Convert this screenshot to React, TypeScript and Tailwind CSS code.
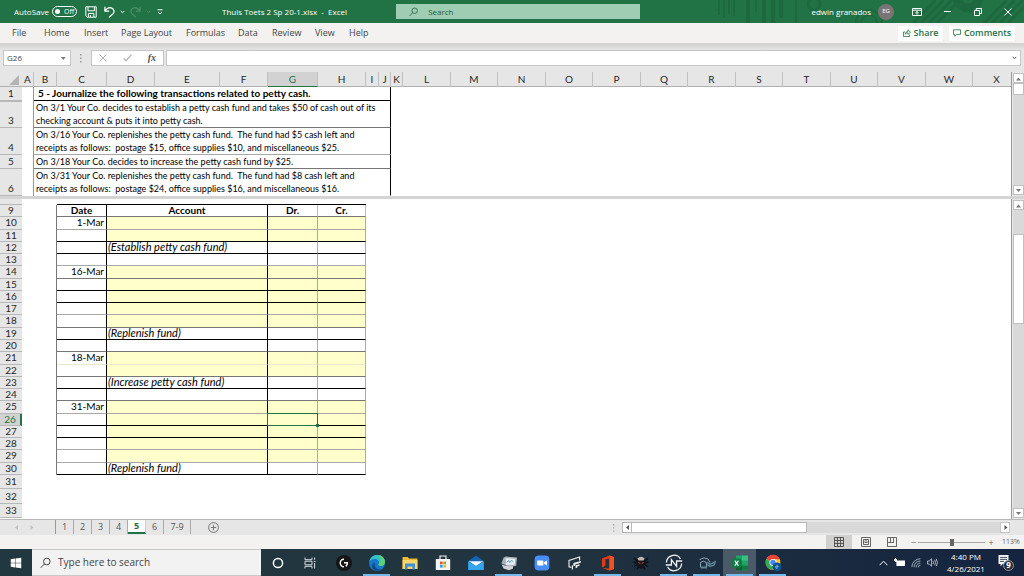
import React, { useState } from 'react'
import clsx from 'clsx'
import { FaWindows } from 'react-icons/fa'

const COLUMNS = 'ABCDEFGHIJKLMNOPQRSTUVWX'.split('')
const TABS = ['File', 'Home', 'Insert', 'Page Layout', 'Formulas', 'Data', 'Review', 'View', 'Help']
const SHEETS = ['1', '2', '3', '4', '5', '6', '7-9']

const DARK = 'border-b-black'
const MID = 'border-b-[#777]'
const SOFT = 'border-b-[#a8a8a8]'

const SHORT = 'h-[12px]'
const TALL = 'h-[13px]'

type Entry = { n: number; h: string; line: string; date?: string; note?: string; fill?: boolean }

const ENTRIES: Entry[] = [
    { n: 10, h: TALL, line: SOFT, date: '1-Mar', fill: true },
    { n: 11, h: SHORT, line: DARK, fill: true },
    { n: 12, h: SHORT, line: DARK, note: '(Establish petty cash fund)' },
    { n: 13, h: SHORT, line: SOFT },
    { n: 14, h: TALL, line: MID, date: '16-Mar', fill: true },
    { n: 15, h: SHORT, line: DARK, fill: true },
    { n: 16, h: SHORT, line: DARK, fill: true },
    { n: 17, h: SHORT, line: SOFT, fill: true },
    { n: 18, h: TALL, line: MID, fill: true },
    { n: 19, h: SHORT, line: DARK, note: '(Replenish fund)' },
    { n: 20, h: SHORT, line: MID },
    { n: 21, h: TALL, line: 'border-b-[#eaeaca]', date: '18-Mar', fill: true },
    { n: 22, h: SHORT, line: MID, fill: true },
    { n: 23, h: SHORT, line: DARK, note: '(Increase petty cash fund)' },
    { n: 24, h: SHORT, line: MID },
    { n: 25, h: TALL, line: SOFT, date: '31-Mar', fill: true },
    { n: 26, h: SHORT, line: DARK, fill: true },
    { n: 27, h: SHORT, line: DARK, fill: true },
    { n: 28, h: SHORT, line: SOFT, fill: true },
    { n: 29, h: TALL, line: SOFT, fill: true },
    { n: 30, h: SHORT, line: DARK, note: '(Replenish fund)' },
]

const BLANK_ROWS = [
    { n: 31, h: 'h-[14px]' },
    { n: 32, h: 'h-[15px]' },
    { n: 33, h: 'h-[14px]' },
]

const QUESTIONS = [
    { n: 3, h: 'h-[27px]', line: MID, text: ['On 3/1 Your Co. decides to establish a petty cash fund and takes $50 of cash out of its', 'checking account & puts it into petty cash.'] },
    { n: 4, h: 'h-[27px]', line: SOFT, text: ['On 3/16 Your Co. replenishes the petty cash fund.  The fund had $5 cash left and', 'receipts as follows:  postage $15, office supplies $10, and miscellaneous $25.'] },
    { n: 5, h: 'h-[14px]', line: MID, text: ['On 3/18 Your Co. decides to increase the petty cash fund by $25.'] },
    { n: 6, h: 'h-[27px]', line: 'border-b-white', text: ['On 3/31 Your Co. replenishes the petty cash fund.  The fund had $8 cash left and', 'receipts as follows:  postage $24, office supplies $16, and miscellaneous $16.'] },
]

const ROW_HEAD = 'border-b border-b-[#b8b8b8] p-0 text-center font-normal'

function Caret({ className = '' }: { className?: string }) {
    return (
        <svg className={className} width="5" height="4" viewBox="0 0 5 4" fill="none" stroke="currentColor">
            <path d="M0.7 0.9 2.5 2.7 4.3 0.9" />
        </svg>
    )
}

function Arrow({ dir }: { dir: 'up' | 'down' | 'left' | 'right' }) {
    const shapes = { up: 'M0 4.5 2.5 1.5 5 4.5z', down: 'M0 1 2.5 4 5 1z', left: 'M4 0 1 2.5 4 5z', right: 'M1.5 0 4.5 2.5 1.5 5z' }
    return (
        <svg width="5" height="5" viewBox="0 0 5 5" fill="currentColor">
            <path d={shapes[dir]} />
        </svg>
    )
}

function Magnifier({ size }: { size: number }) {
    return (
        <svg width={size} height={size} viewBox="0 0 12 12" fill="none" stroke="currentColor">
            <circle cx="7.4" cy="4.4" r="3.6" />
            <path d="M4.8 7 0.8 11.2" />
        </svg>
    )
}

function TitleArt() {
    return (
        <svg className="absolute right-0 top-0 h-[23px] w-[310px]" viewBox="0 0 310 23" fill="none" stroke="#1e683f">
            <path strokeWidth="2" d="M5 0v15M10 0v18M15 0v14M20 0v16M42 0v12M82 0v23" />
            <path strokeWidth="4" d="M34 0v23M50 0v23M59 0v23M67 0v18" />
            <circle cx="100" cy="4" r="6" strokeWidth="3" />
            <circle cx="155" cy="23" r="8" strokeWidth="2" />
            <circle cx="155" cy="23" r="13" strokeWidth="2" />
            <path strokeWidth="3" d="M199 23 222 0M207 23 230 0M215 23 238 0M223 23 246 0" />
            <path strokeWidth="9" d="M242 -4C246 12 262 12 266 -4" />
            <path strokeWidth="3" d="M270 23 293 0M278 23 301 0M286 23 309 0M294 23 317 0" />
        </svg>
    )
}

function TitleBar() {
    return (
        <header className="relative flex h-[23px] items-center bg-[#217346] text-[9px] text-white">
            <TitleArt />
            <div className="flex w-[222px] shrink-0 items-center pl-[14px]">
                <label className="flex w-[71px] items-center justify-between pr-2">
                    <span className="whitespace-nowrap text-[8px]">AutoSave</span>
                    <input type="checkbox" className="sr-only" />
                    <span className="flex h-[11px] w-[25px] items-center gap-[4px] rounded-full border border-white pl-[2px] text-[7px] leading-none">
                        <i className="size-[5px] rounded-full bg-white" />Off
                    </span>
                </label>
                <button aria-label="Save" className="w-[19px]">
                    <svg width="12" height="12" viewBox="0 0 12 12" fill="none" stroke="currentColor">
                        <path d="M0.8 0.8h10.4v10.4H2.2L0.8 9.8zM3 0.8v4h6.4v-4M3.4 11V7.4h5.4V11M5.4 9v2" />
                    </svg>
                </button>
                <button aria-label="Undo" className="flex w-[26px] items-center gap-[5px]">
                    <svg width="11" height="12" viewBox="0 0 11 12" fill="none" stroke="currentColor" strokeWidth="1.2">
                        <path d="M0.9 0.8v4.3h4.3M1 5C3 2 5 1.4 7 1.8c3 0.8 4 4 1.8 6.2L5 11.4" />
                    </svg>
                    <Caret />
                </button>
                <button aria-label="Redo" className="flex w-[27px] items-center gap-[5px] text-[#4b8e67]">
                    <svg width="11" height="12" viewBox="0 0 11 12" fill="none" stroke="currentColor" strokeWidth="1.2">
                        <path d="M10.1 0.8v4.3H5.8M10 5C8 2 6 1.4 4 1.8c-3 0.8-4 4-1.8 6.2L6 11.4" />
                    </svg>
                    <Caret />
                </button>
                <button aria-label="Customize toolbar">
                    <svg width="6" height="6" viewBox="0 0 6 6" fill="none" stroke="currentColor">
                        <path d="M0.5 0.8h5M1 3 3 5 5 3" />
                    </svg>
                </button>
            </div>
            <h1 className="w-[174px] shrink-0 whitespace-pre text-[8px]">Thuis Toets 2 Sp 20-1.xlsx  -  Excel</h1>
            <label className="flex h-[15px] w-[244px] items-center gap-[10px] bg-[#9fcdb3] pl-[13px] text-[#1e5c3a]">
                <Magnifier size={10} />
                <input aria-label="Search" placeholder="Search" className="w-full bg-transparent text-[8px] outline-none placeholder:text-[#1e5c3a]" />
            </label>
            <div className="relative ml-auto flex items-center">
                <span className="text-[8px]">edwin granados</span>
                <span className="ml-[7px] flex size-4 items-center justify-center rounded-full bg-[#7a7574] text-[6px]">EG</span>
                <button aria-label="Ribbon display options" className="flex w-[45px] justify-center">
                    <svg width="10" height="8" viewBox="0 0 10 8" fill="none" stroke="currentColor">
                        <path d="M0.5 0.5h9v7h-9zM0.5 2.2h9M5 6.6V3.6M3.4 5 5 3.5 6.6 5" />
                    </svg>
                </button>
                <button aria-label="Minimize" className="flex w-[16px] justify-center">
                    <i className="h-px w-[7px] bg-white" />
                </button>
                <button aria-label="Restore" className="flex w-[45px] justify-center">
                    <svg width="8" height="8" viewBox="0 0 8 8" fill="none" stroke="currentColor">
                        <path d="M0.5 2.5h5v5h-5zM2.2 2.3V0.5h5.3v5H5.8" />
                    </svg>
                </button>
                <button aria-label="Close" className="flex w-[24px] pl-[4px]">
                    <svg width="8" height="8" viewBox="0 0 8 8" stroke="currentColor">
                        <path d="M0.5 0.5 7.5 7.5M7.5 0.5 0.5 7.5" />
                    </svg>
                </button>
            </div>
        </header>
    )
}

function Ribbon() {
    return (
        <nav className="flex h-5 items-center bg-[#f3f2f1] pl-3 text-[9px] text-[#444]">
            <div className="grid grid-cols-[32px_40px_37px_65px_52px_34px_43px_34px_34px]">
                {TABS.map((tab) => (
                    <button key={tab} className="whitespace-nowrap text-left">{tab}</button>
                ))}
            </div>
            <div className="ml-auto flex gap-[6px] pr-[9px] font-semibold text-[#217346]">
                <button className="flex h-[15px] w-[45px] items-center justify-center gap-[3px] bg-white">
                    <svg width="8" height="8" viewBox="0 0 8 8" fill="none" stroke="currentColor" strokeWidth="0.8">
                        <path d="M2.2 3H0.5v4.5h6V5.6M2.2 5.4C2.4 3.4 3.6 2.5 5 2.5V0.8L7.6 3.2 5 5.4V3.8C3.8 3.8 2.8 4.2 2.2 5.4z" />
                    </svg>
                    Share
                </button>
                <button className="flex h-[15px] w-[66px] items-center justify-center gap-[3px] bg-white">
                    <svg width="8" height="8" viewBox="0 0 8 8" fill="none" stroke="currentColor" strokeWidth="0.8">
                        <path d="M0.5 0.8h7v4.6H3.4L1.7 7.3V5.4H0.5z" />
                    </svg>
                    Comments
                </button>
            </div>
        </nav>
    )
}

function FormulaBar() {
    return (
        <div className="flex h-[29px] items-start bg-linear-to-b from-[#cfcfcf] to-[#e6e6e6] to-25% pl-[3px] pr-[3px] pt-[7px] text-[8px] text-[#444]">
            <div className="flex h-4 w-[68px] shrink-0 items-center border border-[#c6c6c6] bg-white pr-1 text-[#777]">
                <input aria-label="Name box" defaultValue="G26" className="w-full min-w-0 pl-[3px] text-[#444] outline-none" />
                <Arrow dir="down" />
            </div>
            <svg className="mx-[8px] mt-1 shrink-0" width="4" height="9" viewBox="0 0 4 9" fill="#999">
                <path d="M1 0h1.5v1.5H1zM1 3.5h1.5V5H1zM1 7h1.5v1.5H1z" />
            </svg>
            <div className="flex h-4 w-[73px] shrink-0 items-center justify-between border border-[#c6c6c6] bg-white px-[7px]">
                <button aria-label="Cancel">
                    <svg width="8" height="8" viewBox="0 0 8 8" stroke="#b0b0b0"><path d="M0.5 0.5 7.5 7.5M7.5 0.5 0.5 7.5" /></svg>
                </button>
                <button aria-label="Enter">
                    <svg width="9" height="8" viewBox="0 0 9 8" fill="none" stroke="#b8b8b8" strokeWidth="1.4"><path d="M0.6 4.4 3 6.8 8.4 0.8" /></svg>
                </button>
                <button className="font-['Liberation_Serif',serif] text-[10px] font-bold italic leading-none text-[#555]">fx</button>
            </div>
            <div className="ml-[2px] flex h-4 flex-1 items-center border border-[#c6c6c6] bg-white pr-[3px]">
                <input aria-label="Formula" className="w-full outline-none" />
                <Caret />
            </div>
        </div>
    )
}

function ColumnHeaders() {
    return (
        <div className="grid h-[15px] grid-cols-[22px_12px_23px_50px_48px_65px_48px_50px_48px_13px_12px_12px_48px_47px_48px_47px_48px_47px_48px_47px_48px_47px_48px_47px_48px] border-b border-[#b0b0b0] bg-[#e6e6e6] text-[10px] leading-[14px] text-[#262626]">
            <div className="flex items-end justify-end pb-[2px] pr-[3px]">
                <svg width="10" height="10" viewBox="0 0 10 10" fill="#b4b4b4"><path d="M10 0v10H0z" /></svg>
            </div>
            {COLUMNS.map((col) => (
                <div
                    key={col}
                    className={clsx('h-[15px] border-r border-[#c0c0c0] text-center', col === 'G' && 'border-b border-b-[#217346] bg-[#d2d2d2] text-[#217346]')}
                >
                    {col}
                </div>
            ))}
        </div>
    )
}

function QuestionPane() {
    return (
        <table className="w-[391px] table-fixed border-separate border-spacing-0 text-[10px] leading-[13px] text-black">
            <colgroup>
                <col className="w-[22px]" />
                <col className="w-[12px]" />
                <col className="w-[357px]" />
            </colgroup>
            <tbody>
                <tr className="h-[14px]">
                    <th className={clsx(ROW_HEAD, 'bg-[#e6e6e6] align-bottom text-[#262626]')}>1</th>
                    <td className="border-r border-[#999] p-0" />
                    <td className="border-b border-r border-black p-0 pl-1 font-bold">5 - Journalize the following transactions related to petty cash.</td>
                </tr>
                {QUESTIONS.map((q) => (
                    <tr key={q.n} className={q.h}>
                        <th className={clsx(ROW_HEAD, 'bg-[#e6e6e6] align-bottom text-[#262626]', q.n === 3 && 'border-t border-t-[#b8b8b8]')}>{q.n}</th>
                        <td className="border-r border-[#999] p-0" />
                        <td className={clsx('whitespace-pre border-b border-r border-r-black p-0 pl-[2px] align-top text-[9px]', q.line)}>{q.text.join('\n')}</td>
                    </tr>
                ))}
            </tbody>
        </table>
    )
}

function JournalPane() {
    const selected = 26
    return (
        <table className="mb-px w-[366px] table-fixed border-separate border-spacing-0 text-[10px] leading-[11px] text-black">
            <colgroup>
                <col className="w-[22px]" />
                <col className="w-[35px]" />
                <col className="w-[50px]" />
                <col className="w-[161px]" />
                <col className="w-[50px]" />
                <col className="w-[48px]" />
            </colgroup>
            <tbody>
                <tr className="h-[6px]">
                    <th className="border-b border-[#b8b8b8] bg-[#e6e6e6] p-0" />
                    <td className="p-0" />
                    <td colSpan={4} className="border-b border-black p-0" />
                </tr>
                <tr className="h-[12px]">
                    <th className={clsx(ROW_HEAD, 'bg-[#e6e6e6] text-[#262626]')}>9</th>
                    <td className="border-r border-[#777] p-0" />
                    <th className="border-b border-r border-black border-b-[#777] p-0">Date</th>
                    <th className="border-b border-r border-black border-b-[#777] p-0">Account</th>
                    <th className="border-b border-r border-[#bbb] border-b-[#777] p-0">Dr.</th>
                    <th className="border-b border-r border-[#bbb] border-b-[#777] p-0">Cr.</th>
                </tr>
                {ENTRIES.map((row) => {
                    const fill = row.fill && 'bg-[#ffffcc]'
                    return (
                        <tr key={row.n} className={clsx('align-top', row.h)}>
                            <th className={clsx(ROW_HEAD, row.n === selected ? 'border-r-2 border-r-[#217346] bg-[#d2d2d2] text-[#217346]' : 'bg-[#e6e6e6] text-[#262626]')}>{row.n}</th>
                            <td className="border-r border-[#777] p-0" />
                            <td className={clsx('border-b border-r border-r-black p-0 pr-[2px] text-right', row.line)}>{row.date}</td>
                            <td className={clsx('whitespace-nowrap border-b border-r border-r-black p-0 pl-px text-[11px] italic leading-[9px]', row.line, fill)}>{row.note}</td>
                            <td className={clsx('relative border-b border-r border-r-[#aaa] p-0', row.line, fill)}>
                                {row.n === selected && (
                                    <div className="absolute -inset-px z-10 border border-[#217346]">
                                        <i className="absolute -bottom-[2px] -right-[2px] size-[3px] bg-[#217346]" />
                                    </div>
                                )}
                            </td>
                            <td className={clsx('border-b border-r border-r-[#aaa] p-0', row.line, fill)} />
                        </tr>
                    )
                })}
                {BLANK_ROWS.map((row) => (
                    <tr key={row.n} className={row.h}>
                        <th className={clsx(ROW_HEAD, 'bg-[#e6e6e6] text-[#262626]')}>{row.n}</th>
                        <td colSpan={5} className="p-0" />
                    </tr>
                ))}
            </tbody>
        </table>
    )
}

const SCROLL_BUTTON = 'flex h-[10px] w-[11px] shrink-0 items-center justify-center border border-[#c0c0c0] bg-white text-[#777]'

function VerticalScroll({ thumb }: { thumb: string }) {
    return (
        <div className="flex w-[13px] shrink-0 flex-col items-center border-l border-[#999] bg-[#e6e6e6] py-px">
            <button aria-label="Scroll up" className={SCROLL_BUTTON}><Arrow dir="up" /></button>
            <div className="w-[11px] flex-1 bg-[#d9d9d9]">
                <div className={clsx('border border-[#c0c0c0] bg-white', thumb)} />
            </div>
            <button aria-label="Scroll down" className={SCROLL_BUTTON}><Arrow dir="down" /></button>
        </div>
    )
}

function SheetTabs() {
    const [active, setActive] = useState<string>('5')

    return (
        <div className="flex h-4 items-start border-t border-[#b8b8b8] bg-[#e6e6e6] text-[9px] text-[#555]">
            <div className="flex w-[55px] shrink-0 justify-center gap-[10px] pr-[8px] pt-[5px] text-[#c0c0c0]">
                <Arrow dir="left" />
                <Arrow dir="right" />
            </div>
            <div className="flex border-l border-[#999]">
                {SHEETS.map((name) => (
                    <button
                        key={name}
                        onClick={() => setActive(name)}
                        className={clsx(
                            'h-[14px] border-r leading-[12px]',
                            name === '7-9' ? 'w-[27px]' : 'w-[18px]',
                            name === active ? 'border-b-2 border-[#217346] border-r-[#ccc] bg-white font-bold text-[#217346]' : 'border-[#aaa]',
                        )}
                    >
                        {name}
                    </button>
                ))}
            </div>
            <button aria-label="New sheet" className="ml-[17px] mt-[2px]">
                <svg width="11" height="11" viewBox="0 0 11 11" fill="none" stroke="#777">
                    <circle cx="5.5" cy="5.5" r="4.9" />
                    <path d="M5.5 2.8v5.4M2.8 5.5h5.4" />
                </svg>
            </button>
            <svg className="ml-auto mr-[7px] mt-1" width="2" height="8" viewBox="0 0 2 8" fill="#aaa">
                <path d="M0 0h1.4v1.4H0zM0 3.2h1.4v1.4H0zM0 6.4h1.4v1.4H0z" />
            </svg>
            <div className="mr-[14px] mt-[2px] flex h-[11px] w-[388px] bg-[#d9d9d9]">
                <button aria-label="Scroll left" className="flex w-[10px] items-center justify-center border border-[#b8b8b8] bg-white"><Arrow dir="left" /></button>
                <div className="w-[175px] border-y border-r border-[#b8b8b8] bg-white" />
                <button aria-label="Scroll right" className="ml-auto flex w-[10px] items-center justify-center border border-[#c6c6c6] bg-white"><Arrow dir="right" /></button>
            </div>
        </div>
    )
}

function StatusBar() {
    return (
        <div className="flex h-[14px] items-center justify-end bg-[#f3f2f1] text-[7px] text-[#666]">
            <button aria-label="Normal view" className="flex h-full w-[26px] items-center justify-center bg-[#d2d0ce]">
                <svg width="10" height="10" viewBox="0 0 10 10" fill="none" stroke="#555"><path d="M0.5 0.5h9v9h-9zM3.5 0.5v9M6.5 0.5v9M0.5 3.5h9M0.5 6.5h9" /></svg>
            </button>
            <button aria-label="Page layout" className="flex w-[27px] items-center justify-center">
                <svg width="10" height="10" viewBox="0 0 10 10" fill="none" stroke="#666"><path d="M0.5 0.5h9v9h-9zM2.5 2.5h5v5h-5zM3.5 4h3M3.5 5.5h3" /></svg>
            </button>
            <button aria-label="Page break preview" className="flex w-[26px] items-center justify-center">
                <svg width="10" height="10" viewBox="0 0 10 10" fill="none" stroke="#666"><path d="M0.5 0.5h9v9h-9zM0.5 5.5h6v-5M3.5 5.5v-5" /></svg>
            </button>
            <button aria-label="Zoom out" className="w-[11px] text-right text-[9px] leading-none">−</button>
            <input
                type="range"
                aria-label="Zoom"
                min={10}
                max={200}
                defaultValue={108}
                className="mx-[2px] h-2 w-[67px] appearance-none bg-[linear-gradient(#a6a6a6,#a6a6a6)] bg-[length:100%_1px] bg-center bg-no-repeat [&::-webkit-slider-thumb]:h-[7px] [&::-webkit-slider-thumb]:w-[4px] [&::-webkit-slider-thumb]:appearance-none [&::-webkit-slider-thumb]:bg-[#666]"
            />
            <button aria-label="Zoom in" className="w-[8px] text-[9px] leading-none">+</button>
            <span className="w-[29px] pl-[7px]">113%</span>
        </div>
    )
}

const APPS = [
    {
        name: 'Cortana', open: false,
        icon: <circle cx="9" cy="9" r="4.6" stroke="#fff" strokeWidth="1.5" fill="none" />,
    },
    {
        name: 'Task View', open: false,
        icon: <path d="M3 3.5v2.2h7V3.5M3 14.5v-2.2h7v2.2M3 7.2h7v3.6H3zM12.6 3.5v2.3M12.6 9v5.5M11.8 7.4h1.8" stroke="#d8dcdf" fill="none" />,
    },
    {
        name: 'Logitech G Hub', open: false,
        icon: (
            <>
                <circle cx="9" cy="9" r="8" fill="#151515" />
                <path d="M9 5.2a3.8 3.8 0 1 0 0 7.6M9 8.8h3.4c0 1.6-0.6 2.8-1.6 3.6" stroke="#fff" strokeWidth="1.4" fill="none" />
            </>
        ),
    },
    {
        name: 'Edge', open: true,
        icon: (
            <>
                <circle cx="9" cy="9" r="8" fill="#1778c8" />
                <path d="M1.2 7.6C2.5 2.8 6 1 9.2 1 14 1 17 4.5 17 8c0 2.7-2 4-4.2 4-2 0-2.8-1-2-2.2C11.8 7 9.5 5 6.8 5 4.2 5 2.2 6 1.2 7.6z" fill="#35c1c8" />
                <path d="M9.5 1C14 1 17 4.5 17 8c0 2.7-2 4-4.2 4-2 0-2.8-1-2-2.2C14 8 13 3 9.5 1z" fill="#62d06b" />
                <path d="M7.2 8.4C5.5 12 8.5 16 13.6 15.4 11.5 17.2 8 17.4 5.6 15.4 3 13 4 9 7.2 8.4z" fill="#114a8b" />
            </>
        ),
    },
    {
        name: 'File Explorer', open: false,
        icon: (
            <>
                <path d="M1.6 3h5l1.4 1.4h8.4V15H1.6z" fill="#f0b93a" />
                <path d="M1.6 6h14.8v9H1.6z" fill="#fcd668" />
                <path d="M4 15.4V9.6h10v5.8h-2.6v-2.8H6.6v2.8z" fill="#3c8fd8" />
            </>
        ),
    },
    {
        name: 'Microsoft Store', open: false,
        icon: (
            <>
                <path d="M6 5V2h6v3" stroke="#f4f4f4" strokeWidth="1.2" fill="none" />
                <path d="M1.8 5h14.4v11H1.8z" fill="#f4f4f4" />
                <path d="M6 7.6h2.7v2.7H6z" fill="#e8532c" />
                <path d="M9.3 7.6H12v2.7H9.3z" fill="#7db928" />
                <path d="M6 10.9h2.7v2.7H6z" fill="#2aa3e8" />
                <path d="M9.3 10.9H12v2.7H9.3z" fill="#fcb713" />
            </>
        ),
    },
    {
        name: 'Mail', open: false,
        icon: (
            <>
                <path d="M1.2 7 9 1.6 16.8 7v9H1.2z" fill="#1264b4" />
                <path d="M1.8 7.2h14.4L9 12z" fill="#f5f8fb" />
                <path d="M1.2 7.2 9 12.2l7.8-5V16H1.2z" fill="#34a6ee" />
            </>
        ),
    },
    {
        name: 'System Monitor', open: true,
        icon: (
            <>
                <path d="m1.4 9.6 2.2-6.2L6 2.6l11 0.8-0.8 8.4-6 1.2z" fill="#a9b1b7" />
                <path d="m5.6 4.2 9.8 0.6-0.8 6-8.6 0.2z" fill="#e4eef4" />
                <path d="m6.8 8.4 1.8-2 1.2 2.2 1.8-2.4 1.4 1.6" stroke="#5f9dc0" fill="none" />
                <path d="m1.6 10.4 3.4 1 8 0.8v2.4l-4 1.6-5.4-1.6z" fill="#d0d4d7" />
            </>
        ),
    },
    {
        name: 'Zoom', open: false,
        icon: (
            <>
                <rect x="1.6" y="1.6" width="14.8" height="14.8" rx="4" fill="#4a8cf8" />
                <path d="M4.2 6.6h5.2q1 0 1 1v3.8H5.2q-1 0-1-1zM11 8.2l3-1.8v5.2l-3-1.8z" fill="#fff" />
            </>
        ),
    },
    {
        name: 'Recorder', open: false,
        icon: (
            <>
                <path d="M5.4 13.4 3 12.8V6.4L13.6 3v3.4" stroke="#f0f0f0" strokeWidth="1.1" fill="none" />
                <path d="m7.4 9 7.4-2v1.8L9.2 10.4v1.4l-1.8 0.4zM9.6 11.2l4-1v1.6l-2.4 0.6v1.4l-1.6 0.4zM5.8 11.4l1.2-0.2v4.2H5.8z" fill="#f0f0f0" />
            </>
        ),
    },
    {
        name: 'Office', open: true,
        icon: (
            <>
                <path d="M3 4.6 10.4 1.4 15 3v12l-4.6 1.6L3 14l7.4 0.6V4.2L6.4 5.4v6.4L3 13.4z" fill="#e03a12" />
                <path d="M10.4 1.4 15 3v12l-4.6 1.6z" fill="#f4501e" />
            </>
        ),
    },
    {
        name: 'Spider', open: false,
        icon: (
            <>
                <path d="M6 8 2 4M6 9.4 1.6 8M6 10.4l-4 2M7 12l-2 3.4M12 8l4-4M12 9.4l4.4-1.4M12 10.4l4 2M11 12l2 3.4" stroke="#0b0f14" strokeWidth="1.5" />
                <path d="M5 6q4-6 8 0l-1 7-3 2-3-2z" fill="#15161a" />
                <path d="M5.4 4.6q3.6-3.6 7.2 0l-1.2 2H6.6z" fill="#c9b3b3" />
                <path d="m6.4 8.4 2 1.2M11.6 8.4l-2 1.2" stroke="#d33a3a" />
            </>
        ),
    },
    {
        name: 'Nitro', open: true,
        icon: (
            <g stroke="#f4f4f4" fill="none" strokeWidth="1.3">
                <path d="M0.8 11h5.6V5.6l5.2 6.8V7h5.6" />
                <path d="M1.4 8.6A7.6 7.6 0 0 1 15.4 4.8M2.6 13.2a7.6 7.6 0 0 0 14-3.8" />
            </g>
        ),
    },
    {
        name: 'Winged Tool', open: true,
        icon: (
            <g fill="none" stroke="#8fa6b4">
                <path d="M1.6 5.6 6 3.8l4 1.2 2 3.4M2.4 8.4q3-2.4 6 0v4.8H2.6z" />
                <path d="m9 8 3 2.4 5.2-2.6-1 3.2-4 1.4L9 10.6M3 13.8h6" stroke="#5b8494" strokeWidth="1.4" />
            </g>
        ),
    },
    {
        name: 'Excel', open: true,
        icon: (
            <>
                <path d="M5 1.6h12v14.8H5z" fill="#21a366" />
                <path d="M11 1.6h6v5h-6z" fill="#33c481" />
                <path d="M5 6.6h6v5H5zM11 11.6h6v4.8h-6z" fill="#107c41" />
                <path d="M5 11.6h6v4.8H5z" fill="#185c37" />
                <rect x="1" y="4.6" width="9" height="9" rx="1" fill="#107c41" />
                <path d="m3.8 6.6 3.6 5M7.4 6.6l-3.6 5" stroke="#fff" strokeWidth="1.2" />
            </>
        ),
    },
    {
        name: 'Chrome', open: true,
        icon: (
            <>
                <circle cx="9" cy="8.4" r="7.4" fill="#fcc934" />
                <path d="M9 8.4 2.4 4.8A7.4 7.4 0 0 1 15.8 5.2H9z" fill="#ea4335" />
                <path d="M2.5 4.8A7.4 7.4 0 0 0 8.4 15.8L11 11z" fill="#34a853" />
                <circle cx="9" cy="8.4" r="3.5" fill="#fff" />
                <circle cx="9" cy="8.4" r="2.7" fill="#4285f4" />
                <circle cx="13" cy="12.8" r="4.4" fill="#0b5394" />
                <path d="M11.6 12.8h2.6a1.3 1.3 0 1 0-0.5 1.2" stroke="#9cc3e5" strokeWidth="0.8" fill="none" />
            </>
        ),
    },
]

function Taskbar() {
    return (
        <footer className="flex h-[27px] items-stretch bg-linear-to-r from-[#223840] via-[#21343f] to-[#15243f] text-white">
            <button aria-label="Start" className="flex w-8 shrink-0 items-center justify-center"><FaWindows size={12} /></button>
            <label className="flex w-[229px] shrink-0 items-center gap-[7px] border-y border-[#c8c8c8] bg-[#f2f2f2] pl-2 text-[#333]">
                <Magnifier size={12} />
                <input aria-label="Type here to search" placeholder="Type here to search" className="w-full bg-transparent text-[10px] outline-none placeholder:text-[#444]" />
            </label>
            <div className="flex">
                {APPS.map((app) => (
                    <button key={app.name} aria-label={app.name} className={clsx('flex w-[33px] flex-col items-center justify-between pt-[5px]', app.name === 'Excel' && 'bg-[#4b5a68]')}>
                        <svg width="18" height="18" viewBox="0 0 18 18">{app.icon}</svg>
                        <i className={clsx('h-[2px] w-[27px]', app.open && 'bg-[#76b9ed]')} />
                    </button>
                ))}
            </div>
            <div className="ml-auto flex items-center gap-[6px] pr-[10px] text-[8px]">
                <svg width="9" height="6" viewBox="0 0 9 6" fill="none" stroke="#fff"><path d="M0.6 5.2 4.5 1.2 8.4 5.2" /></svg>
                <svg width="11" height="9" viewBox="0 0 11 9" fill="#fff"><path d="M0 1h1V0h1v1h1v1.4h8V8H2.4V4H1V3H0z" /></svg>
                <svg width="10" height="10" viewBox="0 0 10 10" fill="none" stroke="#c4ccd4" strokeWidth="0.8"><path d="M0.8 9A8.4 8.4 0 0 1 9.4 0.8M3 9.2A6.2 6.2 0 0 1 9.4 3M5.2 9.4A4 4 0 0 1 9.4 5.2M7.2 9.4a2 2 0 0 1 2.2-2" /></svg>
                <svg width="11" height="9" viewBox="0 0 11 9" fill="none" stroke="#d4dae0" strokeWidth="0.8"><path d="M0.6 3h1.6L4.6 0.8v7.4L2.2 6H0.6zM6 3q1 1.5 0 3M7.6 1.8q2 2.7 0 5.4M9.2 0.8q2.6 3.7 0 7.4" /></svg>
                <div className="w-[44px] text-center leading-[12px]">
                    <div>4:40 PM</div>
                    <div>4/26/2021</div>
                </div>
                <button aria-label="Notifications" className="relative ml-[4px]">
                    <svg width="16" height="17" viewBox="0 0 16 17">
                        <path d="M0.5 1h10v9H4.6l-2 2.4V10H0.5z" fill="#f4f4f4" />
                        <path d="M2 3.4h7M2 5.4h7M2 7.4h4" stroke="#15243f" strokeWidth="0.8" />
                        <circle cx="10.5" cy="11.5" r="5" fill="#2b2f36" stroke="#aab0b8" strokeWidth="0.8" />
                    </svg>
                    <span className="absolute bottom-[2px] right-0 w-[11px] text-center text-[8px] font-bold leading-[8px]">9</span>
                </button>
            </div>
        </footer>
    )
}

export default function App() {
    return (
        <div className="w-full overflow-hidden bg-white font-['Open_Sans','Noto_Sans',sans-serif]">
            <TitleBar />
            <Ribbon />
            <FormulaBar />
            <main className="bg-[#e6e6e6] font-[Lato,sans-serif]">
                <section className="flex">
                    <div className="min-w-0 flex-1 overflow-hidden bg-white">
                        <ColumnHeaders />
                        <QuestionPane />
                    </div>
                    <VerticalScroll thumb="h-[12px]" />
                </section>
                <div className="h-[3px] bg-[#d4d4d4]" />
                <section className="flex">
                    <div className="min-w-0 flex-1 overflow-hidden bg-white">
                        <JournalPane />
                    </div>
                    <VerticalScroll thumb="mt-[24px] h-[90px]" />
                </section>
            </main>
            <SheetTabs />
            <StatusBar />
            <Taskbar />
        </div>
    )
}
